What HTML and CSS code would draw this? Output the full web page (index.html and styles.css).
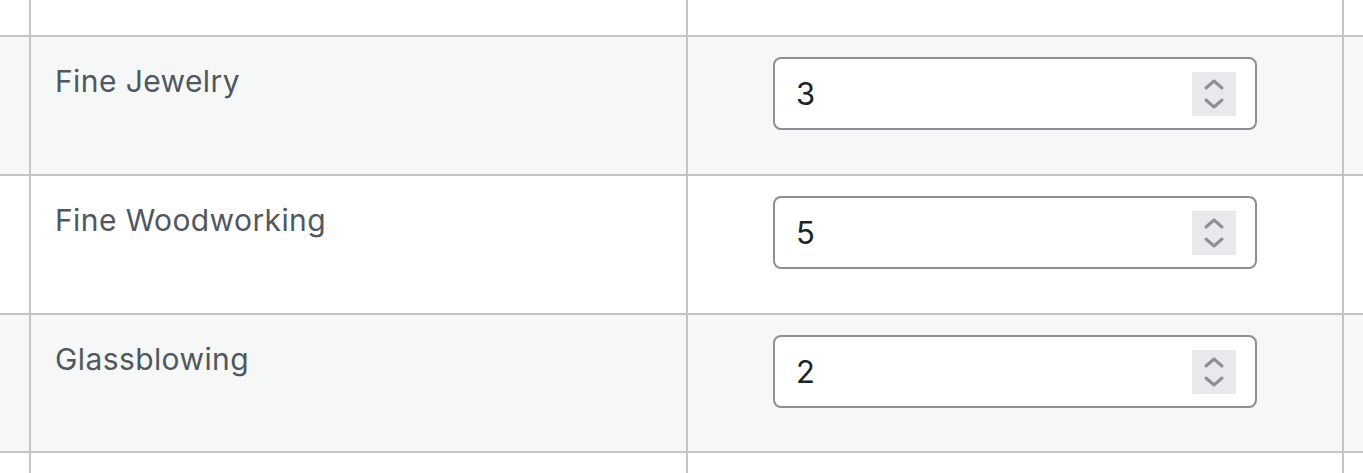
FILE: index.html
```html
<!DOCTYPE html>
<html>
<head>
<meta charset="utf-8">
<link rel="stylesheet" href="styles.css">
</head>
<body>
<div class="table">
  <div class="row row-top">
    <div class="cell c-edge"></div>
    <div class="cell c-name"></div>
    <div class="cell c-qty"></div>
    <div class="cell c-rest"></div>
  </div>
  <div class="row alt">
    <div class="cell c-edge"></div>
    <div class="cell c-name"><span class="label">Fine Jewelry</span></div>
    <div class="cell c-qty">
      <div class="num-input"><span class="val">3</span>
        <span class="spin"><svg width="44" height="44" viewBox="0 0 44 44"><path d="M14 16 L22 9 L30 16" fill="none" stroke="#8c8f94" stroke-width="3" stroke-linecap="round" stroke-linejoin="round"/><path d="M14 28 L22 35 L30 28" fill="none" stroke="#8c8f94" stroke-width="3" stroke-linecap="round" stroke-linejoin="round"/></svg></span>
      </div>
    </div>
    <div class="cell c-rest"></div>
  </div>
  <div class="row">
    <div class="cell c-edge"></div>
    <div class="cell c-name"><span class="label">Fine Woodworking</span></div>
    <div class="cell c-qty">
      <div class="num-input"><span class="val">5</span>
        <span class="spin"><svg width="44" height="44" viewBox="0 0 44 44"><path d="M14 16 L22 9 L30 16" fill="none" stroke="#8c8f94" stroke-width="3" stroke-linecap="round" stroke-linejoin="round"/><path d="M14 28 L22 35 L30 28" fill="none" stroke="#8c8f94" stroke-width="3" stroke-linecap="round" stroke-linejoin="round"/></svg></span>
      </div>
    </div>
    <div class="cell c-rest"></div>
  </div>
  <div class="row alt row-last">
    <div class="cell c-edge"></div>
    <div class="cell c-name"><span class="label">Glassblowing</span></div>
    <div class="cell c-qty">
      <div class="num-input"><span class="val">2</span>
        <span class="spin"><svg width="44" height="44" viewBox="0 0 44 44"><path d="M14 16 L22 9 L30 16" fill="none" stroke="#8c8f94" stroke-width="3" stroke-linecap="round" stroke-linejoin="round"/><path d="M14 28 L22 35 L30 28" fill="none" stroke="#8c8f94" stroke-width="3" stroke-linecap="round" stroke-linejoin="round"/></svg></span>
      </div>
    </div>
    <div class="cell c-rest"></div>
  </div>
  <div class="row row-bottom">
    <div class="cell c-edge"></div>
    <div class="cell c-name"></div>
    <div class="cell c-qty"></div>
    <div class="cell c-rest"></div>
  </div>
</div>
</body>
</html>
```
FILE: styles.css
```css
html, body {
  margin: 0;
  padding: 0;
  background: #ffffff;
}
body {
  font-family: Inter, "Liberation Sans", Arial, sans-serif;
  color: #50575e;
  overflow: hidden;
}
.table {
  width: 1363px;
}
.row {
  display: flex;
  height: 137px;
  border-bottom: 2px solid #c3c4c7;
  background: #ffffff;
}
.row.alt {
  background: #f6f7f7;
}
.row-top {
  height: 35px;
}
.row-last {
  height: 136px;
}
.row-bottom {
  height: 40px;
  border-bottom: none;
}
.cell {
  box-sizing: border-box;
}
.c-edge {
  width: 29px;
}
.c-name {
  width: 657px;
  border-left: 2px solid #c3c4c7;
  padding: 24px 0 0 24px;
}
.c-qty {
  width: 656px;
  border-left: 2px solid #c3c4c7;
  padding-top: 20px;
  display: flex;
  justify-content: center;
  align-items: flex-start;
}
.c-rest {
  flex: 1;
  border-left: 2px solid #c3c4c7;
}
.label {
  font-size: 30px;
  line-height: 40px;
  letter-spacing: 0.4px;
}
.num-input {
  box-sizing: border-box;
  width: 484px;
  height: 73px;
  border: 2px solid #8c8f94;
  border-radius: 8px;
  background: #ffffff;
  display: flex;
  align-items: center;
  justify-content: space-between;
  padding: 0 19px 0 21px;
}
.val {
  font-size: 31px;
  color: #1d2327;
}
.spin {
  width: 44px;
  height: 44px;
  background: #e9e8ed;
  display: block;
}
.spin svg {
  display: block;
}
```
